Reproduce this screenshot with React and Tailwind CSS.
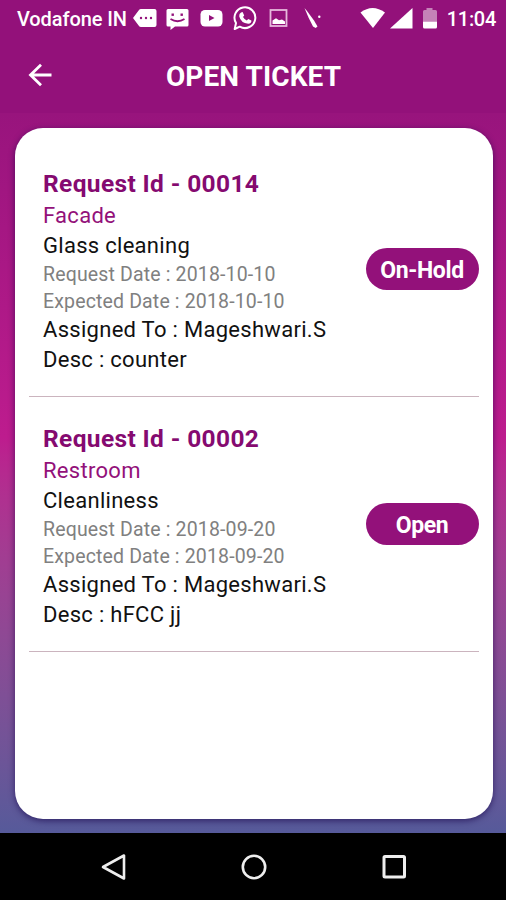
import React from 'react';

const tickets = [
  {
    id: '00014',
    area: 'Facade',
    type: 'Glass cleaning',
    requestDate: '2018-10-10',
    expectedDate: '2018-10-10',
    assignedTo: 'Mageshwari.S',
    desc: 'counter',
    status: 'On-Hold',
  },
  {
    id: '00002',
    area: 'Restroom',
    type: 'Cleanliness',
    requestDate: '2018-09-20',
    expectedDate: '2018-09-20',
    assignedTo: 'Mageshwari.S',
    desc: 'hFCC jj',
    status: 'Open',
  },
];

const StatusBar = () => (
  <div className="flex h-[36px] items-center pl-[17px] pr-[10px] text-[20px] font-medium text-white">
    <span className="w-[115px] whitespace-nowrap pt-[1px] tracking-[-0.100px]">Vodafone IN</span>
    {/* notification icons */}
    <svg className="h-9 w-[190px] shrink-0" viewBox="132 0 190 36" fill="#fff">
      <path d="M141 9h13.500q2 0 2 2v14q0 2-2 2H141q-1.400 0-2.200-1.200L133 18l5.800-7.800Q139.600 9 141 9z" />
      <g fill="#93117a">
        <circle cx="141" cy="18" r="1.200" />
        <circle cx="146" cy="18" r="1.200" />
        <circle cx="151" cy="18" r="1.200" />
      </g>
      <path d="M168 9h19q1.500 0 1.500 1.500V25q0 1.500-1.500 1.500h-12L170.500 30v-3.500H168q-1.500 0-1.500-1.500V10.500Q166.500 9 168 9z" />
      <g fill="#93117a">
        <rect x="171.500" y="13.500" width="2.400" height="2.400" />
        <rect x="180.500" y="13.500" width="2.400" height="2.400" />
      </g>
      <path d="M170.500 19q7 4.500 14 0" fill="none" stroke="#93117a" strokeWidth="1.800" />
      <rect x="200.500" y="10" width="22" height="16.500" rx="4.500" />
      <path d="M209 15v6l5.500-3z" fill="#93117a" />
      <path
        d="M236 23a10.400 10.400 0 1 1 3.800 3.700L234.700 29z"
        fill="none"
        stroke="#fff"
        strokeWidth="2"
        strokeLinejoin="round"
      />
      <path d="M241 12.500l1.600-.4 1.600 3.400-1.200 1.500q1.300 2.400 3.800 3.400l1.400-1.400 3.200 1.500q.3 3.100-3.200 3.200-7.400-.7-9-7.500-.2-2.500 1.800-3.700z" />
      <rect x="270.500" y="10" width="16" height="16" fill="none" stroke="#e6b8dc" strokeWidth="1.800" />
      <path d="M272.500 24v-3.500l3.500-2.300 3 2 3-.700 3 2V24z" />
      <path d="M304.500 8l2.500 3 7 9.500 3.500 6-1.800 1.500-2.700-1.500-4.500-9z" />
      <circle cx="319.300" cy="16.800" r="1.200" />
    </svg>
    {/* wifi, signal and battery */}
    <svg className="ml-auto h-9 w-[79px] shrink-0" viewBox="359 0 79 36" fill="#fff">
      <path d="M359.500 12.500q12-9 24.500 0L372 28z" />
      <path d="M411.500 8v20.500H389z" />
      <path d="M425.500 8h6v2h3q1.500 0 1.500 1.500V22h-14V11.500q0-1.500 1.500-1.500h2z" fill="#c583b8" />
      <path d="M422 21.800h14V27q0 1.500-1.500 1.500h-11q-1.500 0-1.500-1.500z" />
    </svg>
    <span className="ml-[8px] pt-[1px] tracking-[-0.300px]">11:04</span>
  </div>
);

const Header = () => (
  <div className="relative flex h-[77px] items-center justify-center pl-[1px] pt-[5px]">
    <svg className="absolute left-[28px] top-[27px] h-[24px] w-[24px]" viewBox="0 0 24 24" fill="none" stroke="#fff" strokeWidth="2.800">
      <path d="M23.500 12H3M13 1.800L2.500 12 13 22.200" />
    </svg>
    <h1 className="text-[28px] font-bold tracking-[0.100px] text-white">OPEN TICKET</h1>
  </div>
);

const TicketItem = ({ ticket }) => (
  <div className="mx-[14px] flex h-[255px] items-start justify-between border-b-[1.500px] border-[#cbb4be] pl-[14px]">
    <div className="whitespace-nowrap pt-[26px] text-[22px] leading-[30px] tracking-[0.290px] text-[#111]">
      <h2 className="text-[24.500px] font-bold leading-[32px] tracking-[0.360px] text-[#850a70]">
        Request Id - {ticket.id}
      </h2>
      <p className="leading-[31px] text-[#93117a]">{ticket.area}</p>
      <p>{ticket.type}</p>
      <p className="text-[19.500px] leading-[27px] tracking-[0.150px] text-[#808080]">Request Date : {ticket.requestDate}</p>
      <p className="text-[19.500px] leading-[27px] tracking-[0.150px] text-[#808080]">Expected Date : {ticket.expectedDate}</p>
      <p>Assigned To : {ticket.assignedTo}</p>
      <p>Desc : {ticket.desc}</p>
    </div>
    <span className="mt-[106px] flex h-[42px] w-[113px] shrink-0 items-center justify-center rounded-full bg-[#93117a] pr-[1px] pt-[4px] text-[23px] font-bold tracking-[-0.350px] text-white">
      {ticket.status}
    </span>
  </div>
);

const NavBar = () => (
  <div className="flex h-[67px] items-center justify-center gap-[112px] bg-black pl-[2px]">
    <svg className="h-[28px] w-[28px]" viewBox="0 0 28 28" fill="none" stroke="#eee" strokeWidth="2.600" strokeLinejoin="round">
      <path d="M24 2.500v23L3 14z" />
    </svg>
    <svg className="h-[28px] w-[28px]" viewBox="0 0 28 28" fill="none" stroke="#eee" strokeWidth="2.600">
      <circle cx="14" cy="14" r="11.200" />
    </svg>
    <svg className="h-[28px] w-[28px]" viewBox="0 0 28 28" fill="none" stroke="#eee" strokeWidth="3">
      <rect x="4" y="3.500" width="20.500" height="20.500" rx="1" />
    </svg>
  </div>
);

const App = () => {
  return (
    <div className="flex h-[900px] w-[506px] flex-col overflow-hidden font-['Roboto',sans-serif]">
      <header className="bg-[#93117a]">
        <StatusBar />
        <Header />
      </header>
      <main className="flex flex-1 flex-col bg-linear-to-b from-[#98147d] via-[#bd1c8e] via-45% to-[#565a9a] pb-[14px] pl-[15px] pr-[13px] pt-[15px]">
        <section className="flex-1 rounded-[28px] bg-white pt-[14px] shadow-[0_2px_6px_rgba(20,0,70,0.600)]">
          {tickets.map((ticket) => (
            <TicketItem key={ticket.id} ticket={ticket} />
          ))}
        </section>
      </main>
      <NavBar />
    </div>
  );
};

export default App;
